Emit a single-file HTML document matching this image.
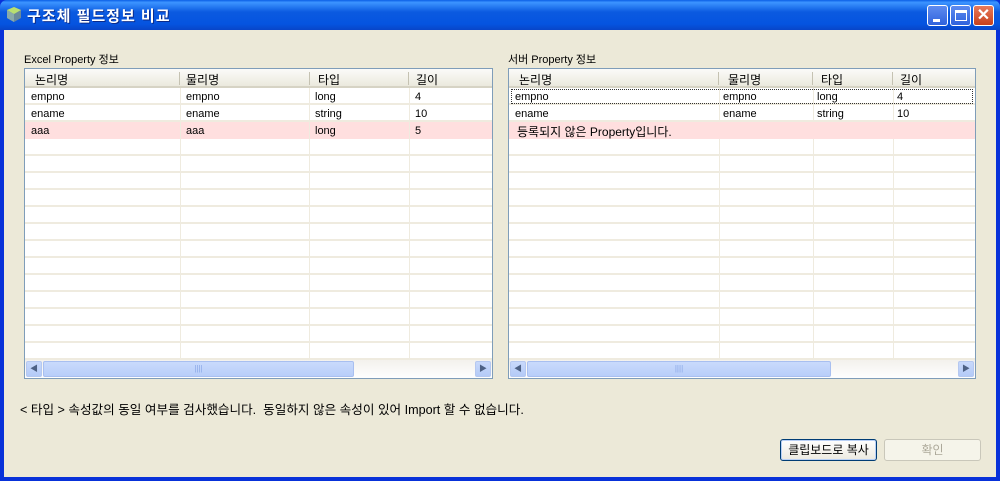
<!DOCTYPE html>
<html><head><meta charset="utf-8"><style>
*{margin:0;padding:0;box-sizing:border-box}
body{width:1000px;height:481px;overflow:hidden;font-family:"Liberation Sans","Noto Sans CJK KR",sans-serif;font-size:11px;color:#000;position:relative;background:#0831d9}
.title{position:absolute;left:0;top:0;width:1000px;height:30px;background:linear-gradient(#0a5fe6 0%,#3d95ff 8%,#0b5ae0 40%,#0554e0 80%,#0845c8 100%);border-radius:7px 7px 0 0}
.title .t{position:absolute;left:27px;top:5px;color:#fff;font-size:15px;font-weight:bold;letter-spacing:1px;text-shadow:1px 1px #0a2a8a}
.body{position:absolute;left:4px;top:30px;width:992px;height:447px;background:#ECE9D8}
.btn{position:absolute;top:5px;width:21px;height:21px;border:1px solid #fff;border-radius:3px}
.tbl{position:absolute;top:68px;height:311px;border:1px solid #7f9db9;background:#fff;overflow:hidden}
.hdr{position:absolute;left:0;top:0;right:0;height:19px;background:linear-gradient(#fbfbf9,#ebe9dd);border-bottom:2px solid #d6d3c4;font-size:12px}
.hdr span{position:absolute;top:2px}
.hdr i{position:absolute;top:3px;width:1px;height:13px;background:#c5c2b2}
.row{position:absolute;left:0;right:0;height:17px;border-bottom:2px solid #efebdf}
.col{position:absolute;top:19px;bottom:18px;width:1px;background:#efebdf}
.cell{position:absolute;font-size:11px;top:3px}
.sb{position:absolute;left:0;right:0;bottom:0;height:18px;background:linear-gradient(#f3f1ec,#fefefe)}
.arr{position:absolute;top:1px;width:16px;height:16px;background:linear-gradient(#c8d9fb,#b4cbf7);border:1px solid #b5c8f0;border-radius:2px;color:#4d6185;font-size:8px;text-align:center;line-height:14px}
.thumb{position:absolute;top:1px;height:16px;background:linear-gradient(#c9dafc,#b8cef9);border:1px solid #a8bff0;border-radius:2px;color:#8aa7e6;font-size:8px;text-align:center;line-height:14px}
</style></head><body>
<div class="title"><svg style="position:absolute;left:6px;top:6px" width="17" height="17"><polygon points="8,1 15,4 15,12 8,16 1,12 1,4" fill="#6a8a9a"/><polygon points="8,1 15,4 8,8 1,4" fill="#b8e070"/><polygon points="1,4 8,8 8,16 1,12" fill="#8aa"/></svg><div class="t">구조체 필드정보 비교</div>
<div class="btn" style="left:927px;background:linear-gradient(#5e8bf0,#2f63dd)"><div style="position:absolute;left:5px;top:13px;width:7px;height:3px;background:#fff"></div></div>
<div class="btn" style="left:950px;background:linear-gradient(#5e8bf0,#2f63dd)"><div style="position:absolute;left:4px;top:4px;width:12px;height:11px;border:1px solid #fff;border-top-width:3px"></div></div>
<div class="btn" style="left:973px;background:linear-gradient(#e87a5a,#c7401c);color:#fff;font-size:16px;font-weight:bold;text-align:center;line-height:19px">✕</div>
</div>
<div class="body"></div>
<div style="position:absolute;left:24px;top:51px">Excel Property 정보</div>
<div style="position:absolute;left:508px;top:51px">서버 Property 정보</div>

<div class="tbl" style="left:24px;width:469px">
<div class="hdr"><span style="left:10px">논리명</span><i style="left:154px"></i><span style="left:161px">물리명</span><i style="left:284px"></i><span style="left:293px">타입</span><i style="left:383px"></i><span style="left:391px">길이</span></div>
<div class="row" style="top:19px"><span class="cell" style="left:6px">empno</span><span class="cell" style="left:161px">empno</span><span class="cell" style="left:290px">long</span><span class="cell" style="left:390px">4</span></div>
<div class="row" style="top:36px"><span class="cell" style="left:6px">ename</span><span class="cell" style="left:161px">ename</span><span class="cell" style="left:290px">string</span><span class="cell" style="left:390px">10</span></div>
<div class="row" style="top:53px;background:#ffdfdf;border-color:#ffdfdf"><span class="cell" style="left:6px">aaa</span><span class="cell" style="left:161px">aaa</span><span class="cell" style="left:290px">long</span><span class="cell" style="left:390px">5</span></div>
<div class="row" style="top:70px"></div><div class="row" style="top:87px"></div><div class="row" style="top:104px"></div><div class="row" style="top:121px"></div><div class="row" style="top:138px"></div><div class="row" style="top:155px"></div><div class="row" style="top:172px"></div><div class="row" style="top:189px"></div><div class="row" style="top:206px"></div><div class="row" style="top:223px"></div><div class="row" style="top:240px"></div><div class="row" style="top:257px"></div><div class="row" style="top:274px"></div>
<div class="col" style="left:155px"></div><div class="col" style="left:284px"></div><div class="col" style="left:384px"></div>
<div class="sb"><div class="arr" style="left:1px">◀</div><div class="thumb" style="left:18px;width:311px">||||</div><div class="arr" style="right:1px">▶</div></div>
</div>

<div class="tbl" style="left:508px;width:468px">
<div class="hdr"><span style="left:10px">논리명</span><i style="left:209px"></i><span style="left:219px">물리명</span><i style="left:303px"></i><span style="left:312px">타입</span><i style="left:383px"></i><span style="left:391px">길이</span></div>
<div class="row" style="top:19px"><div style="position:absolute;left:2px;top:1px;right:2px;height:15px;border:1px dotted #333"></div><span class="cell" style="left:6px">empno</span><span class="cell" style="left:214px">empno</span><span class="cell" style="left:308px">long</span><span class="cell" style="left:388px">4</span></div>
<div class="row" style="top:36px"><span class="cell" style="left:6px">ename</span><span class="cell" style="left:214px">ename</span><span class="cell" style="left:308px">string</span><span class="cell" style="left:388px">10</span></div>
<div class="row" style="top:53px;background:#ffdfdf;border-color:#ffdfdf"><span class="cell" style="left:8px;font-size:12px;top:1px">등록되지 않은 Property입니다.</span></div>
<div class="row" style="top:70px"></div><div class="row" style="top:87px"></div><div class="row" style="top:104px"></div><div class="row" style="top:121px"></div><div class="row" style="top:138px"></div><div class="row" style="top:155px"></div><div class="row" style="top:172px"></div><div class="row" style="top:189px"></div><div class="row" style="top:206px"></div><div class="row" style="top:223px"></div><div class="row" style="top:240px"></div><div class="row" style="top:257px"></div><div class="row" style="top:274px"></div>
<div class="col" style="left:210px;top:70px"></div><div class="col" style="left:304px;top:70px"></div><div class="col" style="left:384px;top:70px"></div>
<div class="col" style="left:210px;top:19px;height:34px"></div><div class="col" style="left:304px;top:19px;height:34px"></div><div class="col" style="left:384px;top:19px;height:34px"></div>
<div class="sb"><div class="arr" style="left:1px">◀</div><div class="thumb" style="left:18px;width:304px">||||</div><div class="arr" style="right:1px">▶</div></div>
</div>

<div style="position:absolute;left:20px;top:399px;font-size:12.6px">&lt; 타입 &gt; 속성값의 동일 여부를 검사했습니다.&nbsp; 동일하지 않은 속성이 있어 Import 할 수 없습니다.</div>

<div style="position:absolute;left:780px;top:439px;width:97px;height:22px;border:1px solid #003c74;border-radius:3px;background:linear-gradient(#fff,#ece9e0);box-shadow:inset 0 0 0 1px #b9d0f6;font-size:12px;text-align:center;line-height:20px">클립보드로 복사</div>
<div style="position:absolute;left:884px;top:439px;width:97px;height:22px;border:1px solid #c9c7ba;border-radius:3px;background:#f5f4ea;color:#aca899;font-size:12px;text-align:center;line-height:20px">확인</div>
</body></html>
